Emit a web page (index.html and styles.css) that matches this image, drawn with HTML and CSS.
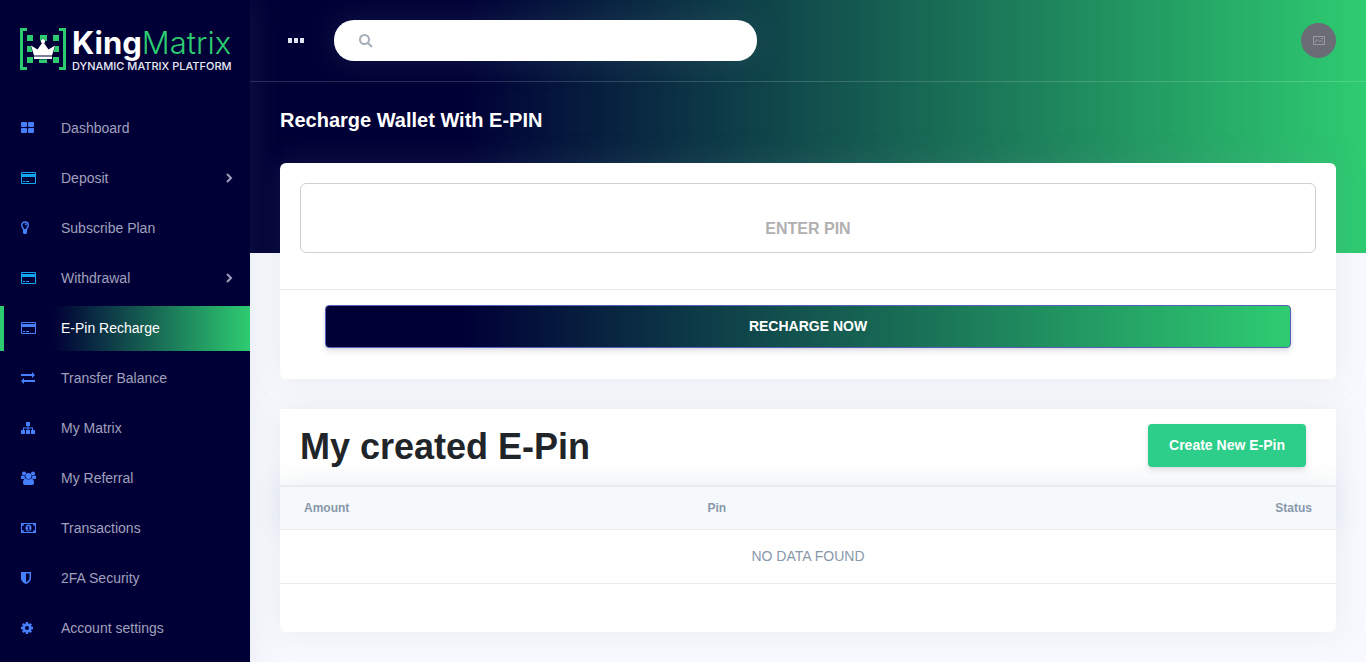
FILE: index.html
```html
<!DOCTYPE html>
<html lang="en">
<head>
<meta charset="utf-8">
<meta name="viewport" content="width=device-width, initial-scale=1">
<title>KingMatrix - E-Pin Recharge</title>
<link rel="stylesheet" href="styles.css">
</head>
<body>
<div class="app">
  <aside class="sidebar">
    <a class="brand" href="#">
      <svg class="brand-mark" viewBox="0 0 46 42" aria-hidden="true">
        <g fill="#2ecc71">
          <path d="M0 0h7v3H3v36h4v3H0zM39 0h7v42h-7v-3h4V3h-4z"/>
          <path d="M7 7h6v6H7zM20 7h7v6h-7zM33 7h6v6h-6zM7 18h6v6H7zM33 18h6v6h-6zM7 29h6v6H7zM19 29h8v6h-8zM33 29h6v6h-6z"/>
        </g>
        <path fill="#fff" stroke="#000036" stroke-width="1" paint-order="stroke" d="M14 27.500l-3-10 6.500 4 4.500-6.500a2 2 0 1 1 2 0l4.500 6.500 6.500-4-3 10zM14 28.500h18v2.500H14z"/>
      </svg>
      <span class="brand-text">
        <span class="brand-name"><b>King</b>Matrix</span>
        <span class="brand-tag">DYNAMIC MATRIX PLATFORM</span>
      </span>
    </a>
    <nav class="menu">
      <a class="item" href="#"><svg class="icon" viewBox="0 0 16 14"><rect y="1" width="6" height="5" rx="1"/><rect x="7" y="1" width="6" height="5" rx="1"/><rect y="7" width="6" height="5" rx="1"/><rect x="7" y="7" width="6" height="5" rx="1"/></svg>Dashboard</a>
      <a class="item cyan" href="#"><svg class="icon" viewBox="0 0 16 14"><path fill-rule="evenodd" d="M1 1h13a1 1 0 0 1 1 1v10a1 1 0 0 1-1 1H1a1 1 0 0 1-1-1V2a1 1 0 0 1 1-1zM1 2v1h13V2zM1 6v6h13V6zM2 10h2v1H2zM5 10h3v1H5z"/></svg>Deposit<svg class="arrow" viewBox="0 0 8 10"><path d="M2 1l4 4-4 4"/></svg></a>
      <a class="item" href="#"><svg class="icon" viewBox="0 0 16 14"><path fill="none" stroke="currentColor" stroke-width="1.400" d="M2.500 8.500C2.500 7 .7 6.300.7 4.300A3.300 3.300 0 0 1 4 1a3.300 3.300 0 0 1 3.300 3.300c0 2-1.800 2.700-1.800 4.200M4 3q1.300 0 1.300 1.300"/><path d="M2 8h4v4L5 13H3l-1-1z"/></svg>Subscribe Plan</a>
      <a class="item cyan" href="#"><svg class="icon" viewBox="0 0 16 14"><path fill-rule="evenodd" d="M1 1h13a1 1 0 0 1 1 1v10a1 1 0 0 1-1 1H1a1 1 0 0 1-1-1V2a1 1 0 0 1 1-1zM1 2v1h13V2zM1 6v6h13V6zM2 10h2v1H2zM5 10h3v1H5z"/></svg>Withdrawal<svg class="arrow" viewBox="0 0 8 10"><path d="M2 1l4 4-4 4"/></svg></a>
      <a class="item active" href="#" aria-current="page"><svg class="icon" viewBox="0 0 16 14"><path fill-rule="evenodd" d="M1 1h13a1 1 0 0 1 1 1v10a1 1 0 0 1-1 1H1a1 1 0 0 1-1-1V2a1 1 0 0 1 1-1zM1 2v1h13V2zM1 6v6h13V6zM2 10h2v1H2zM5 10h3v1H5z"/></svg>E-Pin Recharge</a>
      <a class="item" href="#"><svg class="icon" viewBox="0 0 16 14"><path d="M0 3h11V1l3 3-3 3V5H0zM14 9H3V7l-3 3 3 3v-2h11z"/></svg>Transfer Balance</a>
      <a class="item" href="#"><svg class="icon" viewBox="0 0 16 14"><path d="M5 1h4v4H7.500v1.500H12V9h2v4h-4V9h1V7.500H7.500V9H9v4H5V9h1.500V7.500H3V9h1v4H0V9h2V6.500h4.500V5H5z"/></svg>My Matrix</a>
      <a class="item" href="#"><svg class="icon" viewBox="0 0 16 14"><circle cx="3" cy="2.500" r="2"/><circle cx="12" cy="2.500" r="2"/><circle cx="7.500" cy="5" r="3"/><path d="M0 8V5.500Q0 4.500 1.200 4.500q1.800.8 2.500.3Q3.500 6.500 4.500 7.500L2 8zM15 8V5.500q0-1-1.200-1-1.800.8-2.500.3.200 1.700-.8 2.700L13 8zM2 12q0-4 2.500-4.500 3 2 6 0Q13 8 13 12q0 2-2 2H4q-2 0-2-2z"/></svg>My Referral</a>
      <a class="item" href="#"><svg class="icon" viewBox="0 0 16 14"><path fill-rule="evenodd" d="M0 2h15v10H0zM3 3Q3 5 1 5v4q2 0 2 2h9q0-2 2-2V5q-2 0-2-2z"/><path fill-rule="evenodd" d="M7.500 3.500c4 0 4 7 0 7s-4-7 0-7zM6.500 5.500v1H7v2h-.5v1h2.500v-1h-.8V5H7.300z"/></svg>Transactions</a>
      <a class="item" href="#"><svg class="icon" viewBox="0 0 16 14"><path fill-rule="evenodd" d="M0 1h10v6q0 4-5 6-5-2-5-6zM5 2.500v8.800Q8.500 9.500 8.500 7V2.500z"/></svg>2FA Security</a>
      <a class="item" href="#"><svg class="icon" viewBox="0 0 16 14"><circle cx="6" cy="7" r="3.300" fill="none" stroke="currentColor" stroke-width="2.600"/><path fill="none" stroke="currentColor" stroke-width="2.400" d="M6 1v2M6 11v2M0 7h2M10 7h2M1.800 2.800l1.400 1.400M8.800 9.800l1.400 1.400M1.800 11.200l1.400-1.400M8.800 4.200l1.400-1.400"/></svg>Account settings</a>
    </nav>
  </aside>

  <div class="main">
    <header class="topbar">
      <button class="toggle" type="button" aria-label="Toggle menu"><i></i><i></i><i></i></button>
      <form class="search" role="search">
        <svg viewBox="0 0 14 14" aria-hidden="true"><circle cx="5.500" cy="5.500" r="4.500"/><path d="M9 9l4 4"/></svg>
        <input type="search" aria-label="Search">
      </form>
      <button class="avatar" type="button" aria-label="Account">
        <svg viewBox="0 0 12 9" aria-hidden="true"><path d="M.5.500h11v8H.5zM2 6.500l2-3 2 2 2-1 2 2M8 2.500h2"/></svg>
      </button>
    </header>

    <main class="content">
      <h1 class="page-title">Recharge Wallet With E-PIN</h1>

      <form class="card">
        <div class="card-body">
          <input class="pin" type="text" placeholder="ENTER PIN" aria-label="Enter pin">
        </div>
        <div class="card-footer">
          <button class="recharge" type="button">RECHARGE NOW</button>
        </div>
      </form>

      <section class="card list">
        <div class="list-head">
          <h2>My created E-Pin</h2>
          <button class="create" type="button">Create New E-Pin</button>
        </div>
        <table class="table">
          <thead><tr><th class="col-main">Amount</th><th>Pin</th><th class="end">Status</th></tr></thead>
          <tbody><tr><td colspan="3">NO DATA FOUND</td></tr></tbody>
        </table>
      </section>
    </main>
  </div>
</div>
</body>
</html>
```
FILE: styles.css
```css
:root {
  --navy: #000036;
  --green: #2ecc71;
  --line: #e9ecef;
  --soft: 0 0 32px rgba(136, 152, 170, .15);
}
* { box-sizing: border-box; }
body {
  margin: 0;
  font: 14px/20px "Liberation Sans", Arial, sans-serif;
  color: #8898aa;
  background: #f8f9fe;
}
button, input { font: inherit; }
.app { display: flex; min-height: 100vh; }

.sidebar {
  flex: 0 0 250px;
  z-index: 1;
  background: var(--navy);
  box-shadow: var(--soft);
}
.brand {
  display: flex;
  gap: 6px;
  height: 106px;
  padding: 28px 0 0 20px;
  text-decoration: none;
}
.brand-mark { flex: none; width: 46px; height: 42px; }
.brand-text {
  display: flex;
  flex-direction: column;
  font-family: Inter, sans-serif;
  white-space: nowrap;
}
.brand-name { font-size: 31px; line-height: 30px; font-weight: 300; color: var(--green); }
.brand-name b { font-weight: 700; color: #fff; }
.brand-tag { font-size: 11px; line-height: 16px; font-weight: 500; color: #e8e8f4; }

.menu { display: flex; flex-direction: column; gap: 5px; }
.item {
  display: flex;
  align-items: center;
  height: 45px;
  padding: 0 17px 1px;
  border-left: 4px solid transparent;
  color: #a0a0bd;
  text-decoration: none;
}
.icon {
  width: 16px;
  height: 14px;
  margin-right: 24px;
  color: #4680ff;
  fill: currentColor;
}
.cyan .icon { color: #11a6ef; }
.arrow {
  width: 8px;
  height: 10px;
  margin-left: auto;
  fill: none;
  stroke: #a0a0bd;
  stroke-width: 2;
}
.active {
  color: #fff;
  border-left-color: var(--green);
  background: linear-gradient(90deg, var(--navy) 20%, var(--green) 100%);
}

.main {
  flex: 1;
  min-width: 0;
  background: linear-gradient(90deg, var(--navy) 19%, var(--green) 100%) top / 100% 253px no-repeat;
}
.topbar {
  display: flex;
  align-items: center;
  height: 82px;
  padding: 0 30px 0 38px;
  border-bottom: 1px solid rgba(255, 255, 255, .16);
}
.toggle { display: flex; gap: 2px; padding: 0; border: 0; background: none; }
.toggle i { width: 4px; height: 5px; background: #dfe3f2; }
.search {
  display: flex;
  align-items: center;
  gap: 12px;
  flex: 0 1 423px;
  height: 41px;
  margin: 0 auto 0 30px;
  padding: 0 25px;
  border-radius: 20px;
  background: #fff;
  box-shadow: var(--soft);
}
.search svg { flex: none; width: 14px; height: 14px; fill: none; stroke: #a5adb8; stroke-width: 2; }
.search input { flex: 1; min-width: 0; border: 0; outline: 0; background: none; }
.avatar {
  display: grid;
  place-items: center;
  width: 35px;
  height: 35px;
  padding: 0;
  border: 0;
  border-radius: 50%;
  background: #6b6d76;
}
.avatar svg { width: 12px; height: 9px; fill: none; stroke: #9a9ca4; stroke-width: 1; }

.content { padding: 23px 30px 30px; }
.page-title { margin: 0 0 28px; font-size: 20px; line-height: 30px; color: #fff; }
.card {
  margin-bottom: 30px;
  border-radius: 6px;
  background: #fff;
  box-shadow: var(--soft);
}
.card-body { padding: 20px 20px 36px; }
.pin {
  display: block;
  width: 100%;
  height: 70px;
  padding: 22px 12px 0;
  border: 1px solid #ced0d4;
  border-radius: 6px;
  font-size: 16px;
  font-weight: 700;
  text-align: center;
  color: #495057;
}
.pin::placeholder { color: #b0b0b0; opacity: 1; }
.card-footer { padding: 15px 45px 31px; border-top: 1px solid var(--line); }
.recharge, .create {
  display: block;
  height: 43px;
  border-radius: 4px;
  font-weight: 700;
  color: #fff;
  box-shadow: 0 4px 6px rgba(50, 50, 93, .11), 0 1px 3px rgba(0, 0, 0, .08);
}
.recharge {
  width: 100%;
  padding: 0 0 2px;
  border: 1px solid #5460b8;
  background: linear-gradient(90deg, var(--navy) 14%, var(--green) 100%);
}
.list { padding-bottom: 48px; border-radius: 0 0 6px 6px; }
.list-head {
  display: flex;
  align-items: flex-start;
  justify-content: space-between;
  height: 76px;
  padding: 15px 30px 0 20px;
}
.list-head h2 { margin: 0; font-size: 36px; line-height: 46px; color: #212529; }
.create { padding: 0 21px 1px; border: 0; background: #2dce89; }

.table {
  width: 100%;
  border-collapse: separate;
  border-spacing: 0;
  table-layout: fixed;
}
.table thead { box-shadow: 0 -4px 24px rgba(136, 152, 170, .15); }
.table th {
  height: 45px;
  padding: 0 24px;
  border-top: 2px solid var(--line);
  border-bottom: 1px solid var(--line);
  background: #f6f9fc;
  font-size: 12px;
  text-align: left;
}
.table .col-main { width: 38.2%; }
.table .end { text-align: right; }
.table td {
  height: 54px;
  padding: 0 24px 2px;
  border-bottom: 1px solid var(--line);
  background: #fff;
  text-align: center;
}
```
